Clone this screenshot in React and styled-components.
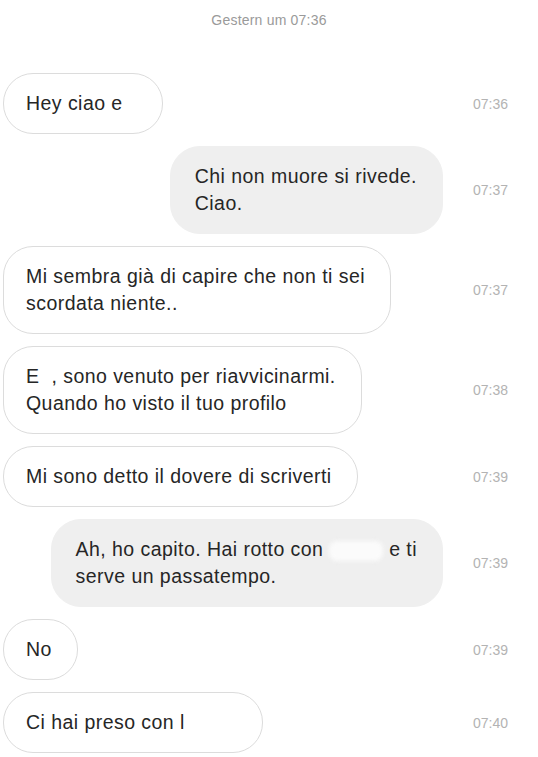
import React from 'react'
import styled, { createGlobalStyle } from 'styled-components'

const GlobalStyle = createGlobalStyle`
  body {
    margin: 0;
    background: #fff;
    font-family: "Liberation Sans", Arial, sans-serif;
  }
`

const Thread = styled.div`
  width: 538px;
  padding: 12px 30px 0 3px;
  box-sizing: border-box;
`

const DayStamp = styled.div`
  text-align: center;
  font-size: 14px;
  line-height: 16px;
  letter-spacing: 0.2px;
  color: #9a9a9a;
  margin: 0 -30px 45px -3px;
`

const List = styled.div`
  display: flex;
  flex-direction: column;
  gap: 12px;
`

const Row = styled.div`
  display: flex;
  align-items: center;
`

const BubbleArea = styled.div`
  width: 440px;
  display: flex;
  justify-content: ${p => (p.$mine ? 'flex-end' : 'flex-start')};
`

const Bubble = styled.div`
  box-sizing: border-box;
  padding: 16px 25px 16px ${p => (p.$mine ? 24 : 22)}px;
  border-radius: 30px;
  font-size: 19.5px;
  letter-spacing: 0.45px;
  line-height: 27px;
  color: #262626;
  white-space: nowrap;
  background: ${p => (p.$mine ? '#efefef' : '#fff')};
  border: 1px solid ${p => (p.$mine ? '#efefef' : '#dcdcdc')};
`

const Time = styled.div`
  margin-left: 30px;
  font-size: 14px;
  color: #b3b3b3;
`

const Hidden = styled.span`
  display: inline-block;
  width: ${p => p.$w}px;
  height: 20px;
  vertical-align: middle;
  border-radius: 8px;
  background: ${p => (p.$blur ? '#fbfbfb' : 'transparent')};
  filter: ${p => (p.$blur ? 'blur(2px)' : 'none')};
`

const messages = [
  { time: '07:36', lines: [['Hey ciao e', { w: 14 }]] },
  { mine: true, time: '07:37', lines: [['Chi non muore si rivede.'], ['Ciao.']] },
  { time: '07:37', lines: [['Mi sembra già di capire che non ti sei'], ['scordata niente..']] },
  { time: '07:38', lines: [['E', { w: 12 }, ', sono venuto per riavvicinarmi.'], ['Quando ho visto il tuo profilo']] },
  { time: '07:39', lines: [['Mi sono detto il dovere di scriverti']] },
  {
    mine: true,
    time: '07:39',
    lines: [['Ah, ho capito. Hai rotto con ', { w: 54, blur: true }, ' e ti'], ['serve un passatempo.']],
  },
  { time: '07:39', lines: [['No']] },
  { time: '07:40', lines: [['Ci hai preso con l', { w: 52 }]] },
]

const App = () => {
  return (
    <>
      <GlobalStyle />
      <Thread>
        <DayStamp>Gestern um 07:36</DayStamp>
        <List>
          {messages.map((m, i) => (
            <Row key={i}>
              <BubbleArea $mine={m.mine}>
                <Bubble $mine={m.mine}>
                  {m.lines.map((line, j) => (
                    <div key={j}>
                      {line.map((part, k) =>
                        typeof part === 'string' ? (
                          <React.Fragment key={k}>{part}</React.Fragment>
                        ) : (
                          <Hidden key={k} $w={part.w} $blur={part.blur} />
                        )
                      )}
                    </div>
                  ))}
                </Bubble>
              </BubbleArea>
              <Time>{m.time}</Time>
            </Row>
          ))}
        </List>
      </Thread>
    </>
  )
}

export default App
